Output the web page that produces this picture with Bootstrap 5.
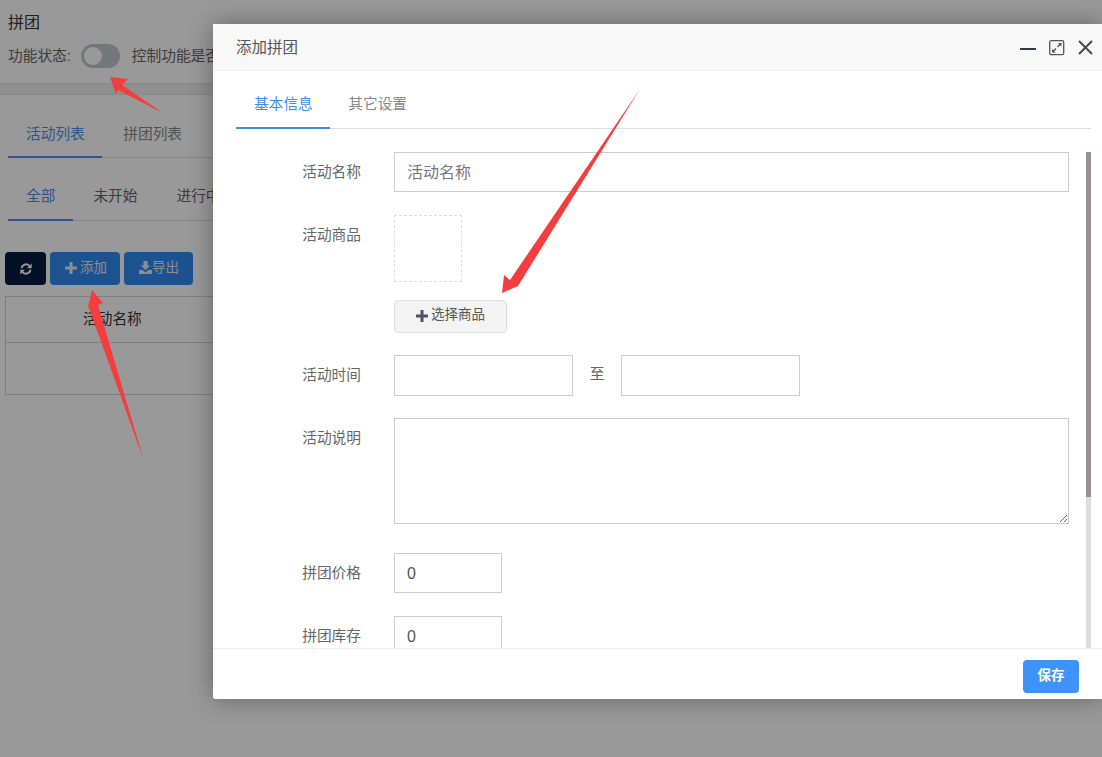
<!DOCTYPE html>
<html lang="zh-CN">
<head>
    <meta charset="UTF-8">
    <meta name="viewport" content="width=device-width, initial-scale=1.0">
    <title>拼团</title>
    <link href="https://cdn.jsdelivr.net/npm/bootstrap@5.3.0/dist/css/bootstrap.min.css" rel="stylesheet">
    <style>
        html, body {
            height: 100%;
            overflow: hidden;
        }
        body {
            background: #fff;
            color: #555;
            font-family: "Liberation Sans", "Noto Sans CJK SC", sans-serif;
            font-size: 14.7px;
        }
        a { text-decoration: none; }
        /* page under the dialog */
        .page-title { font-size: 16px; font-weight: 400; line-height: 22px; color: #333; padding: 12px 8px 0; margin: 0; }
        .status-row { height: 26px; margin-top: 9px; padding-left: 8px; white-space: nowrap; color: #666; }
        .switch-off { width: 39px; height: 24px; border-radius: 12px; background: #c0c6cf; margin: 0 12px 0 10px; padding: 3px; flex: none; }
        .switch-off span { display: block; width: 18px; height: 18px; border-radius: 50%; background: #fff; }
        .gray-band { height: 12px; margin-top: 14px; background: #eee; border-top: 1px solid #e4e4e4; border-bottom: 1px solid #e4e4e4; }
        .page-tabs { margin: 18px 0 0 8px; border-bottom: 1px solid #ddd; flex-wrap: nowrap; white-space: nowrap; }
        .page-tabs a { color: #888; padding: 0 17.500px 0 18px; height: 45px; line-height: 42px; margin-bottom: -1px; display: block; }
        .page-tabs li + li a { padding-left: 21px; }
        .page-tabs a.on { color: #4d8ce8; border-bottom: 2px solid #4d8ce8; }
        .page-tabs.sub-tabs { margin-top: 19px; }
        .sub-tabs a { color: #666; height: 44px; line-height: 38px; padding: 0 19px 0 18px; }
        .sub-tabs li:first-child a { padding-right: 18px; }
        .sub-tabs li + li a { padding-left: 20px; }
        .tool-row { margin: 31px 0 0 5px; gap: 4px; }
        .tool-btn { height: 33px; border-radius: 4px; background: #3089f0; color: #e4ecf7; border: 0; padding: 0 13px 2px; font-size: 13.5px; display: flex; align-items: center; line-height: 1; }
        .tool-btn.dark { background: #041d40; width: 41px; padding: 0; justify-content: center; color: #fff; }
        .tool-btn.wide-pad { padding: 0 14px 2px 15px; }
        .tool-btn .plus-mark { margin: 0 3px 0 2px; }
        .list-box { margin: 11px 0 0 5px; height: 99px; border: 1px solid #d4d4d4; border-right: 0; }
        .list-head { height: 46px; border-bottom: 1px solid #d4d4d4; line-height: 44px; padding-left: 77px; color: #333; }

        .dim-layer { position: absolute; inset: 0; background: rgba(0, 0, 0, .4); }

        /* dialog */
        .add-dialog { position: absolute; left: 213px; top: 24px; width: 889px; height: 675px; background: #fff; box-shadow: 0 0 24px rgba(0, 0, 0, .35); border-radius: 2px 0 0 2px; }
        .dlg-head { height: 47px; background: #f8f8f8; border-bottom: 1px solid #eee; padding: 1px 9px 0 23px; color: #555; font-size: 15.5px; }
        .dlg-tools { gap: 13px; }
        .dlg-body { min-height: 0; padding: 0 11px 0 23px; overflow: hidden; }
        .dlg-tabs { height: 58px; border-bottom: 1px solid #ddd; flex-wrap: nowrap; flex: none; }
        .dlg-tabs a { display: block; height: 58px; line-height: 66px; padding: 0 17.500px 0 18px; margin-bottom: -1px; color: #888; }
        .dlg-tabs a.on { color: #3d8ee6; border-bottom: 2px solid #3d8ee6; }
        .dlg-main { min-height: 0; }
        .dlg-form { width: 833px; padding-top: 23px; }
        .fake-scroll { width: 5px; background: #ddd; margin-top: 23px; flex: none; }
        .fake-scroll div { height: 345px; background: #9b9090; }

        .form-line { display: flex; align-items: flex-start; margin-top: 22px; }
        .form-line:first-child { margin-top: 0; }
        .form-line.gap-goods, .form-line.gap-stock { margin-top: 23px; }
        .form-line.gap-price { margin-top: 29px; }
        .form-line label { width: 125px; flex: none; text-align: right; padding-top: 9px; margin: 0; color: #666; line-height: 22px; }
        .form-ctl { margin-left: 33px; }
        .form-control.plain { border-radius: 0; border-color: #ccc; color: #555; height: 40px; font-size: 16px; padding: 1px 12px 0; box-shadow: none; }
        .form-control.plain::placeholder { color: #777; }
        .w-full { width: 675px; }
        .w-date { width: 179px; height: 41px !important; }
        .w-num { width: 108px; }
        .pick-box { width: 68px; height: 67px; border: 1px dashed #ddd; }
        .pick-btn { display: flex; align-items: center; justify-content: center; gap: 3px; width: 113px; height: 33px; margin-top: 18px; background: #f3f3f3; border: 1px solid #ddd; border-radius: 4px; color: #555; font-size: 13.5px; padding: 0 0 2px; }
        textarea.form-control.plain { width: 675px; height: 106px; padding: 8px 12px; }
        .to-text { width: 48px; text-align: center; color: #666; line-height: 38px; }
        .dlg-foot { height: 51px; border-top: 1px solid #eee; padding: 11px 23px 0 0; flex: none; }
        .save-btn { width: 56px; height: 33px; background: #3d93f8; border: 0; border-radius: 4px; color: #fff; font-size: 13.5px; font-weight: 700; padding: 0; }

        .mark-arrows { position: absolute; left: 0; top: 0; pointer-events: none; }
    </style>
</head>
<body>
    <h1 class="page-title">拼团</h1>
    <div class="status-row d-flex align-items-center">
        <span>功能状态:</span>
        <div class="switch-off"><span></span></div>
        <span>控制功能是否</span>
    </div>
    <div class="gray-band"></div>

    <ul class="nav page-tabs">
        <li><a class="on" href="#">活动列表</a></li>
        <li><a href="#">拼团列表</a></li>
    </ul>
    <ul class="nav page-tabs sub-tabs">
        <li><a class="on" href="#">全部</a></li>
        <li><a href="#">未开始</a></li>
        <li><a href="#">进行中</a></li>
    </ul>

    <div class="d-flex tool-row">
        <button class="tool-btn dark" type="button">
            <svg width="14" height="14" viewBox="0 0 14 14"><path d="M1.600 6.200A5.400 5.400 0 0 1 11 3.200L12.700 1.600V6.300H8L9.700 4.600A3.500 3.500 0 0 0 3.600 6.200ZM12.400 7.800A5.400 5.400 0 0 1 3 10.800L1.300 12.400V7.700H6L4.300 9.400A3.500 3.500 0 0 0 10.400 7.800Z" fill="currentColor"/></svg>
        </button>
        <button class="tool-btn" type="button">
            <svg class="plus-mark" width="12" height="12" viewBox="0 0 12 12"><path d="M4.500 0h3v4.500H12v3H7.500V12h-3V7.500H0v-3h4.500Z" fill="currentColor"/></svg>添加
        </button>
        <button class="tool-btn wide-pad" type="button">
            <svg width="13" height="13" viewBox="0 0 13 13"><path d="M4.500 0h4v4.500h2.800L6.500 9 1.700 4.500h2.800ZM0 9h3.500l3 2.400L9.500 9H13v4H0Z" fill="currentColor"/></svg>导出
        </button>
    </div>
    <div class="list-box">
        <div class="list-head">活动名称</div>
    </div>

    <div class="dim-layer"></div>

    <div class="add-dialog d-flex flex-column">
        <div class="dlg-head d-flex align-items-center justify-content-between flex-shrink-0">
            <span>添加拼团</span>
            <div class="dlg-tools d-flex align-items-center">
                <svg width="16" height="17" viewBox="0 0 16 17"><rect x="0" y="9" width="16" height="2" fill="#2f3a48"/></svg>
                <svg width="16" height="16" viewBox="0 0 16 16" fill="none" stroke="#555"><rect x=".7" y=".7" width="14" height="14" rx="1.500" stroke-width="1.300"/><path d="M8.500 7 12 3.500M3.500 12 7 8.500" stroke-width="1.300"/><path d="M9 3h3.500v3.500ZM3 9v3.500h3.500Z" fill="#555" stroke="none"/></svg>
                <svg width="15" height="15" viewBox="0 0 15 15" fill="none" stroke="#444" stroke-width="1.800"><path d="M1 1 14 14M14 1 1 14"/></svg>
            </div>
        </div>

        <div class="dlg-body flex-grow-1 d-flex flex-column">
            <ul class="nav dlg-tabs">
                <li><a class="on" href="#">基本信息</a></li>
                <li><a href="#">其它设置</a></li>
            </ul>
            <div class="dlg-main d-flex flex-grow-1 justify-content-between">
                <form class="dlg-form">
                    <div class="form-line">
                        <label>活动名称</label>
                        <div class="form-ctl"><input class="form-control plain w-full" type="text" placeholder="活动名称"></div>
                    </div>
                    <div class="form-line gap-goods">
                        <label>活动商品</label>
                        <div class="form-ctl">
                            <div class="pick-box"></div>
                            <button class="pick-btn" type="button">
                                <svg width="12" height="12" viewBox="0 0 12 12"><path d="M4.500 0h3v4.500H12v3H7.500V12h-3V7.500H0v-3h4.500Z" fill="#4a5560"/></svg>选择商品
                            </button>
                        </div>
                    </div>
                    <div class="form-line">
                        <label>活动时间</label>
                        <div class="form-ctl d-flex">
                            <input class="form-control plain w-date" type="text">
                            <span class="to-text">至</span>
                            <input class="form-control plain w-date" type="text">
                        </div>
                    </div>
                    <div class="form-line">
                        <label>活动说明</label>
                        <div class="form-ctl"><textarea class="form-control plain"></textarea></div>
                    </div>
                    <div class="form-line gap-price">
                        <label>拼团价格</label>
                        <div class="form-ctl"><input class="form-control plain w-num" type="text" value="0"></div>
                    </div>
                    <div class="form-line gap-stock">
                        <label>拼团库存</label>
                        <div class="form-ctl"><input class="form-control plain w-num" type="text" value="0"></div>
                    </div>
                </form>
                <div class="fake-scroll"><div></div></div>
            </div>
        </div>

        <div class="dlg-foot d-flex justify-content-end align-items-start">
            <button class="save-btn" type="button">保存</button>
        </div>
    </div>

    <svg class="mark-arrows" width="1102" height="757" viewBox="0 0 1102 757">
        <path d="M110 77 128 79 122 85 163 113 118 90 116 94Z" fill="#f53d3d"/>
        <path d="M92 290 103 303 98 305 144 461 89 308 88 307Z" fill="#f53d3d"/>
        <path d="M502 293 504 275 510 280 640 89 518 286Z" fill="#f53d3d"/>
    </svg>
</body>
</html>
